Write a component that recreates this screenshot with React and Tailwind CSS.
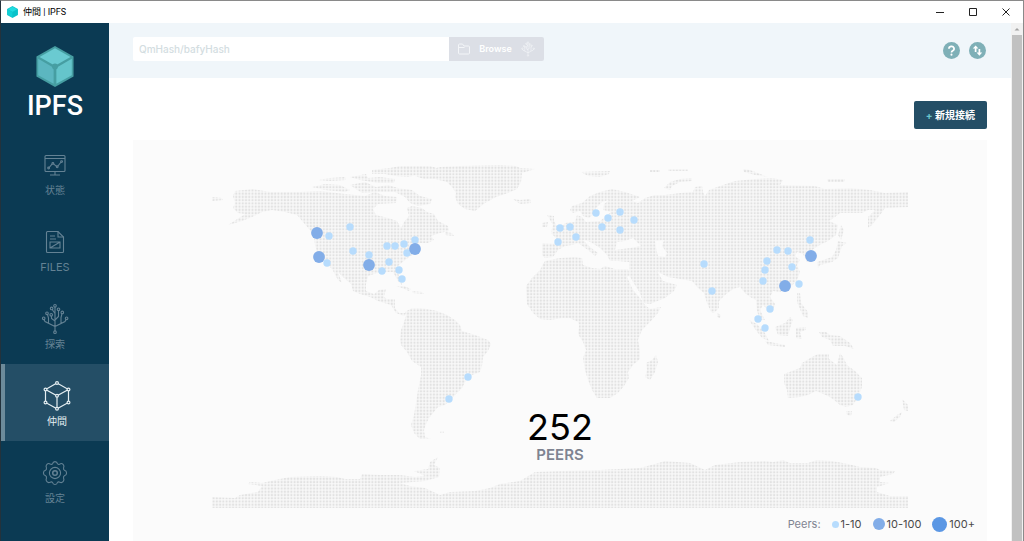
import React from 'react';

const LAND = [
  // North America
  '233,196 235,191 253,189 270,192 300,192 320,191 345,194 365,196 375,192 385,196 397,197 396,203 378,204 373,209 376,215 388,218 397,221 401,228 404,222 409,216 407,208 412,206 422,208 427,212 434,214 438,221 448,226 449,231 440,233 431,236 434,240 428,243 419,243 415,247 412,255 405,260 398,266 397,272 402,280 402,285 398,281 393,272 380,272 368,276 366,284 366,291 374,294 379,290 386,289 384,297 387,299 395,299 395,308 399,313 406,313 404,316 396,313 391,305 378,301 370,297 360,294 353,291 351,284 343,277 338,272 342,283 338,280 332,269 325,262 318,256 315,245 314,236 309,229 303,222 297,215 285,212 272,210 262,212 252,217 242,221 228,225 245,214 238,213 233,208 235,203',
  '212,197 222,198 223,200 212,201',
  '312,187 325,184 340,185 350,190 345,192 325,190',
  '318,180 330,178 345,177 346,180 330,181',
  '350,185 365,182 376,187 388,185 398,188 412,190 420,196 432,199 430,204 418,206 410,203 405,197 395,192 380,192 362,193',
  '350,177 366,174 368,178 380,177 395,179 394,183 378,183 360,180',
  '372,170 390,168 400,166 430,166 440,169 425,173 408,177 395,176 385,174 372,174',
  '445,232 452,233 454,236 445,235',
  '396,286 404,286 411,289 409,291 402,288',
  '412,291 422,292 424,294 412,293',
  // Greenland and Iceland
  '415,176 425,171 440,167 460,166 500,165 516,166 520,168 535,169 522,173 521,182 517,189 508,193 496,197 485,203 480,207 475,211 465,209 458,204 455,197 456,193 452,187 447,182 435,179 424,179',
  '513,199 520,200 530,199 531,203 520,204',
  // South America
  '405,312 412,308 420,308 427,309 437,311 447,315 455,320 460,325 462,331 475,335 488,340 491,344 488,351 483,357 482,366 480,372 472,375 466,380 462,388 455,395 450,400 445,405 438,407 433,413 429,418 426,424 424,430 425,437 431,439 420,439 414,433 411,425 414,415 416,403 418,390 421,375 421,367 412,361 407,352 401,345 400,340 401,330 404,322 406,316',
  '440,431 444,431 444,433 440,433',
  // Africa
  '545,261 560,258 575,257 582,258 583,265 592,268 600,269 605,266 615,269 628,269 630,275 627,277 633,290 640,298 645,305 650,309 661,307 658,313 650,322 642,330 638,340 640,350 640,359 633,365 628,372 629,378 624,386 618,393 610,398 597,398 592,390 588,380 585,370 583,358 586,350 583,342 578,334 579,325 578,322 570,318 562,318 550,320 540,319 533,313 527,304 526,290 526,286 532,278 540,270 543,264',
  '656,355 658,362 655,372 650,380 645,377 647,370 646,363 652,360',
  // British Isles
  '547,215 554,216 554,221 559,230 551,232 553,225',
  '542,223 548,222 547,227 542,227',
  // Arctic islands
  '664,188 670,182 680,179 692,178 692,181 680,182 672,186 670,190',
  '581,172 610,171 609,174 600,177 588,176',
  '650,170 660,170 660,172 650,172',
  '668,169 688,169 688,171 668,171',
  '743,169 750,170 768,177 755,175 744,172',
  '827,179 845,179 844,182 828,182',
  // Japan and Sakhalin
  '838,241 847,243 842,246 838,258 832,262 820,265 818,268 817,262 832,257 836,250',
  '841,225 844,230 841,240 838,235',
  // South-East Asia
  '717,313 721,315 720,318 717,317',
  '749,320 757,324 765,333 769,341 762,338 755,329',
  '765,341 785,345 785,347 768,345',
  '775,327 785,323 790,317 793,320 790,328 788,336 778,335',
  '796,328 806,327 806,330 800,332 802,339 796,338',
  '797,293 800,293 801,303 808,312 808,318 803,316 797,302',
  '819,332 826,332 830,335 840,336 850,343 854,349 845,346 833,346 830,340 822,337',
  // Australia and New Zealand
  '784,374 800,368 802,363 812,357 818,354 829,354 829,359 837,365 840,353 843,357 847,365 855,371 862,378 862,387 858,397 853,405 846,407 840,405 834,400 828,396 816,391 808,395 800,397 788,398 787,390 784,383',
  '846,411 852,411 851,416 847,415',
  '902,399 908,405 908,411 904,410',
  '902,412 900,417 894,422 890,421 897,415',
  // Antarctica
  '212,508 212,497 235,498 240,495 258,492 262,486 248,484 250,482 262,483 275,480 290,477 320,476 337,477 345,479 360,479 362,474 380,475 400,475 415,477 425,476 414,471 428,469 430,462 438,457 434,465 440,468 439,477 425,481 400,483 410,486 425,488 440,495 450,492 475,491 490,488 500,484 520,481 535,472 560,471 600,470 640,468 655,464 665,461 690,463 705,470 715,465 740,462 765,461 773,462 783,460 790,463 808,463 817,460 832,461 848,464 860,467 876,468 880,470 895,471 893,474 880,477 880,482 890,483 877,487 877,492 890,496 908,496 908,508',
];

const EURASIA =
  'M542 243L556 244L556 238L551 233L560 229L565 223L575 222L577 215L582 217L586 222L600 221L606 216L611 212L603 210L604 204L609 200L602 202L596 208L594 214L589 218L583 216L580 211L573 213L570 210L572 206L582 203L590 196L600 192L612 189L625 192L640 197L632 201L638 203L645 198L655 195L665 195L680 193L693 192L695 187L702 186L703 192L705 196L709 190L720 186L735 181L755 179L772 178L783 180L780 185L815 186L825 189L850 188L870 190L885 193L908 192L908 207L885 208L880 215L872 225L868 228L868 217L875 210L868 210L862 213L840 213L835 217L829 221L838 225L836 235L828 241L818 246L812 250L806 251L811 258L812 262L807 262L803 254L797 252L795 256L800 260L797 265L800 272L797 280L790 288L780 292L773 291L770 297L775 304L773 310L767 309L763 305L760 310L765 320L760 320L757 311L756 300L750 297L745 293L740 287L733 289L725 295L719 301L719 308L714 313L711 312L707 303L704 293L698 288L692 281L680 279L668 277L660 273L657 271L663 281L677 285L674 291L665 298L650 304L643 303L640 293L633 282L629 275L629 262L618 261L610 261L607 255L600 248L592 243L588 241L583 240L590 247L598 253L595 256L588 250L578 243L572 245L565 246L558 250L553 257L545 258L542 255Z' +
  'M615 250L617 242L625 241L633 238L641 246L630 248Z' +
  'M655 241L664 240L662 246L667 253L665 257L658 256L656 248Z';

const SMALL_PEERS = [
  [329, 236], [350, 227], [353, 251], [369, 255], [327, 263], [387, 246], [395, 246], [404, 244],
  [415, 240], [407, 253], [389, 262], [382, 271], [399, 270], [402, 279], [468, 377], [449, 399],
  [560, 228], [570, 227], [576, 237], [558, 242], [596, 213], [608, 218], [620, 212], [602, 227],
  [620, 230], [634, 220], [704, 264], [712, 291], [777, 250], [788, 251], [810, 240], [767, 261],
  [765, 270], [792, 267], [763, 281], [799, 284], [770, 309], [758, 319], [765, 328], [858, 397],
];
const MEDIUM_PEERS = [[317, 233], [319, 257], [369, 265], [415, 249], [811, 256], [785, 286]];

function WorldMap() {
  return (
    <svg viewBox="212 140 696 368" className="mx-auto block w-[81.5%]" role="img" aria-label="Peers map">
      <defs>
        <pattern id="dots" x="212" y="140.3" width="3.24" height="3.24" patternUnits="userSpaceOnUse">
          <rect width="3.24" height="3.24" fill="#f8f8f8" />
          <circle cx="1.6" cy="1.6" r="1.1" fill="#e2e2e2" />
        </pattern>
      </defs>
      <g fill="url(#dots)">
        {LAND.map((points) => (
          <polygon key={points} points={points} />
        ))}
        <path d={EURASIA} fillRule="evenodd" />
      </g>
      {SMALL_PEERS.map(([x, y]) => (
        <circle key={`${x}-${y}`} cx={x} cy={y} r="3.7" fill="#b7dcfd" />
      ))}
      {MEDIUM_PEERS.map(([x, y]) => (
        <circle key={`${x}-${y}`} cx={x} cy={y} r="5.9" fill="#82ade8" />
      ))}
    </svg>
  );
}

function Cube({ className, flat }) {
  return (
    <svg viewBox="0 0 38 42" className={className} aria-hidden="true">
      <path d="M19 0L38 10.8V31.2L19 42L0 31.2V10.8Z" fill={flat ? '#12c4cb' : '#469ea2'} />
      <path d="M19 2.4L34.8 11.3L19 20.2L3.2 11.3Z" fill={flat ? '#1fdbe0' : '#6acad1'} />
      <path d="M1.8 13L17.6 22.2V38.7L1.8 30Z" fill={flat ? '#0fd0d6' : '#5cb6c0'} />
      <path d="M36.2 13L20.4 22.2V38.7L36.2 30Z" fill={flat ? '#08c2ca' : '#65c5cb'} />
      {!flat && <circle cx="19" cy="21" r="3" fill="#469ea2" />}
    </svg>
  );
}

function StatusIcon() {
  return (
    <svg viewBox="0 0 28 28" className="size-7" fill="none" stroke="currentColor" strokeWidth="1.1">
      <rect x="4" y="4.5" width="20" height="16" rx="1" />
      <path d="M4 7.5h20M14 20.5v3M9 24h10" />
      <path d="M8.2 16.5l3-3.6M12.5 12.8l3 2.6M16.9 15l3.2-4" />
      <circle cx="7.6" cy="17" r=".9" />
      <circle cx="11.9" cy="12.4" r=".9" />
      <circle cx="16.2" cy="15.8" r=".9" />
      <circle cx="20.6" cy="10.6" r=".9" />
    </svg>
  );
}

function FilesIcon() {
  return (
    <svg viewBox="0 0 28 28" className="size-7" fill="none" stroke="currentColor" strokeWidth="1.1">
      <path d="M6.5 3.5H17l5.5 5.5v14.5a1 1 0 0 1-1 1h-15a1 1 0 0 1-1-1v-19a1 1 0 0 1 1-1z" />
      <path d="M17 3.5V9h5.5M9 8h5M9 11h6" />
      <path d="M9 14h10v6H9zM9 20l10-6" />
    </svg>
  );
}

function TreeIcon({ className = 'size-8' }) {
  return (
    <svg viewBox="0 0 32 32" className={className} fill="none" stroke="currentColor" strokeWidth="1.1">
      <path d="M16 28V4M16 23.5L6 18.5L5 16.5M16 23.5l10-5L27 16.5M9.5 20V15L8.500 11.500M22 20.200V14.500l1-4M16 18l-3.500-2.500V13M16 17l3.500-3.500V7.500M16 10.500L13.200 6.500" />
      <circle cx="16" cy="29.2" r="1.3" />
      <circle cx="16" cy="2.8" r="1.3" />
      <circle cx="4.7" cy="15.3" r="1.3" />
      <circle cx="27.6" cy="15.3" r="1.3" />
      <circle cx="8" cy="10.3" r="1.3" />
      <circle cx="23.3" cy="9.4" r="1.3" />
      <circle cx="12.2" cy="11.8" r="1.3" />
      <circle cx="12.6" cy="5.4" r="1.3" />
      <circle cx="19.5" cy="6.3" r="1.3" />
    </svg>
  );
}

function PeersIcon() {
  const nodes = [[16, 3], [27.5, 9.5], [27.5, 22.5], [16, 28.8], [4.5, 22.5], [4.5, 9.5], [16, 15.8]];
  return (
    <svg viewBox="0 0 32 32" className="size-8" fill="none" stroke="currentColor" strokeWidth="1.2">
      <path d="M16 3L27.5 9.5V22.5L16 28.8L4.5 22.5V9.5ZM4.5 9.5L16 15.8L27.5 9.5M16 15.8V28.8" />
      {nodes.map(([x, y]) => (
        <circle key={`${x}-${y}`} cx={x} cy={y} r="1.4" fill="#244e66" />
      ))}
    </svg>
  );
}

function GearIcon() {
  return (
    <svg viewBox="0 0 28 28" className="size-7" fill="none" stroke="currentColor" strokeWidth="1.1" strokeLinejoin="round">
      <path d="M11.6 4.7C12 1.9 16 1.9 16.4 4.7Q18 6.2 18.9 5C21.2 3.5 23.9 6.3 22.6 8.7Q22.2 10.6 23.4 11.3C26.3 11.9 26.3 16.1 23.4 16.7Q22.2 17.4 22.6 19.3C23.9 21.7 21.2 24.5 18.9 23.2Q17.2 22.5 16.4 23.5C16 26.2 12 26.2 11.6 23.5Q10.8 22.5 9.1 23.2C6.8 24.5 4.1 21.7 5.4 19.3Q5.8 17.4 4.6 16.7C1.7 16.1 1.7 11.9 4.6 11.3Q5.8 10.6 5.4 8.7C4.1 6.3 6.8 3.5 9.1 5Q10.8 5.8 11.6 4.7Z" />
      <circle cx="14" cy="14" r="5.6" />
      <circle cx="14" cy="14" r="2.3" strokeWidth="1.5" />
    </svg>
  );
}

const NAV = [
  { label: '状態', icon: <StatusIcon />, size: 'text-[10px]' },
  { label: 'FILES', icon: <FilesIcon />, size: 'text-[11px]' },
  { label: '探索', icon: <TreeIcon />, size: 'text-[10px]' },
  { label: '仲間', icon: <PeersIcon />, size: 'text-[10px]', active: true },
  { label: '設定', icon: <GearIcon />, size: 'text-[10px]' },
];

function Sidebar() {
  return (
    <aside className="w-[108px] shrink-0 bg-[#0b3a53]">
      <a href="#/welcome" className="flex h-[110px] flex-col items-center gap-[3px] pt-[23px] text-white">
        <Cube className="h-[41px] w-[38px]" />
        <span className="font-['Roboto',sans-serif] text-[27px] leading-8 font-medium">IPFS</span>
      </a>
      <nav>
        {NAV.map(({ label, icon, size, active }) => (
          <a
            key={label}
            href={`#/${label}`}
            aria-current={active ? 'page' : undefined}
            className={
              active
                ? 'flex h-[77px] flex-col items-center border-l-4 border-[#6d8b9a] bg-[#244e66] pt-4 text-[#e4eef2]'
                : 'flex h-[77px] flex-col items-center pt-4 text-[#648294]'
            }
          >
            <span className="flex h-8 items-center">{icon}</span>
            <span className={`${size} leading-[18px]`}>{label}</span>
          </a>
        ))}
      </nav>
    </aside>
  );
}

function TitleBar() {
  return (
    <div className="flex h-[22px] shrink-0 items-center bg-white pl-[6px]">
      <Cube flat className="h-3 w-[11px]" />
      <h1 className="ml-[5px] flex-1 font-['Roboto','Noto_Sans_CJK_JP',sans-serif] text-[9px] leading-4 text-black">
        仲間 | IPFS
      </h1>
      <button type="button" aria-label="Minimize" className="flex w-[33px] justify-center">
        <svg viewBox="0 0 10 10" className="size-[10px]" stroke="#222"><path d="M1 5.5h8" /></svg>
      </button>
      <button type="button" aria-label="Maximize" className="flex w-[33px] justify-center">
        <svg viewBox="0 0 10 10" className="size-[10px]" fill="none" stroke="#222"><path d="M1.5 1.5h7v7h-7z" /></svg>
      </button>
      <button type="button" aria-label="Close" className="flex w-[34px] justify-center">
        <svg viewBox="0 0 10 10" className="size-[10px]" stroke="#222"><path d="M1.5 1.5l7 7M8.5 1.5l-7 7" /></svg>
      </button>
    </div>
  );
}

function Header() {
  return (
    <header className="flex h-[55px] items-start justify-between bg-[#f0f6fa] pt-[14px] pr-[25px] pl-6">
      <form className="flex h-6 w-[411px]">
        <input
          type="text"
          aria-label="QmHash/bafyHash"
          placeholder="QmHash/bafyHash"
          className="min-w-0 flex-1 rounded-l-xs bg-white px-[6px] text-[10px] font-medium placeholder:text-[#d3dde1]"
        />
        <button
          type="button"
          className="flex w-[95px] items-center justify-between rounded-r-xs bg-[#dcdfe6] px-2 text-[9px] leading-4 font-semibold text-white"
        >
          <svg viewBox="0 0 14 14" className="size-[14px]" fill="none" stroke="#f3f5f8">
            <path d="M1.5 11V3a1 1 0 0 1 1-1h3l1.5 2h4.500a1 1 0 0 1 1 1v6a1 1 0 0 1-1 1h-9a1 1 0 0 1-1-1zM1.500 5.500h6" />
          </svg>
          Browse
          <TreeIcon className="size-4 text-[#f5f7fa]" />
        </button>
      </form>
      <div className="flex gap-[9px] pt-[5px]">
        <button type="button" aria-label="Help">
          <svg viewBox="0 0 18 18" className="size-[17px]">
            <circle cx="9" cy="9" r="9" fill="#7fb0b7" />
            <path d="M6.300 7.200a2.700 2.500 0 1 1 4 2.100Q9 10 9 11" fill="none" stroke="#fff" strokeWidth="1.800" />
            <circle cx="9" cy="13.400" r="1.100" fill="#fff" />
          </svg>
        </button>
        <button type="button" aria-label="Connection status">
          <svg viewBox="0 0 18 18" className="size-[17px]">
            <circle cx="9" cy="9" r="9" fill="#7fb0b7" />
            <path d="M7 10.500V6M11 7.500V12" stroke="#fff" strokeWidth="1.800" />
            <path d="M4 7L7 3.600L10 7ZM8 11.200L11 14.600L14 11.200Z" fill="#fff" />
          </svg>
        </button>
      </div>
    </header>
  );
}

function Legend() {
  return (
    <div className="flex items-center justify-end pt-2 pr-3 text-[11px] leading-4 text-[#4a4a4a]">
      <span className="mr-[11px] text-[#7f8491]">Peers:</span>
      <span className="mr-[2px] size-[7px] rounded-full bg-[#b7dcfd]" />
      <span className="mr-[11px]">1-10</span>
      <span className="mr-[2px] size-3 rounded-full bg-[#82ade8]" />
      <span className="mr-[11px]">10-100</span>
      <span className="mr-[2px] size-[15px] rounded-full bg-[#5b97e4]" />
      <span>100+</span>
    </div>
  );
}

export default function App() {
  return (
    <div className="flex h-screen flex-col overflow-hidden border border-b-0 border-t-[#8a8a8a] border-r-[#8a8a8a] border-l-[#23323c] bg-white font-['Inter','Noto_Sans_CJK_JP',sans-serif]">
      <TitleBar />
      <div className="flex min-h-0 flex-1">
        <Sidebar />
        <div className="flex min-w-0 flex-1 flex-col">
          <Header />
          <main className="flex min-h-0 flex-1 flex-col gap-[11px] pt-[23px] pr-6 pl-6">
            <button
              type="button"
              className="h-7 self-end rounded-xs bg-[#244e66] px-3 text-[10px] font-bold text-white"
            >
              <span className="text-[#69c4cd]">+</span> 新規接続
            </button>
            <section className="flex-1 bg-[#fbfbfb]">
              <div className="relative">
                <WorldMap />
                <div className="absolute inset-x-0 bottom-[45px] text-center">
                  <div className="text-[36px] leading-10 text-black">252</div>
                  <div className="text-[15px] leading-4 font-semibold text-[#7f8491]">PEERS</div>
                </div>
              </div>
              <Legend />
            </section>
          </main>
        </div>
        <div className="flex w-3 shrink-0 flex-col items-center bg-[#f1f1f1]" aria-hidden="true">
          <svg viewBox="0 0 12 12" className="size-3"><path d="M3.5 7.5L6 5L8.5 7.5Z" fill="#a3a3a3" /></svg>
          <div className="w-[10px] flex-1 bg-[#c1c1c1]" />
        </div>
      </div>
    </div>
  );
}
